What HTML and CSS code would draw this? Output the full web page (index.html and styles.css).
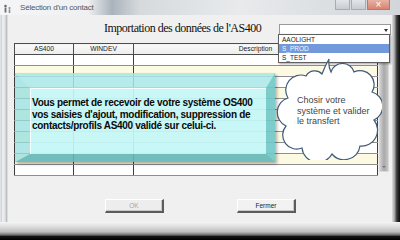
FILE: index.html
```html
<!DOCTYPE html>
<html lang="fr">
  <head>
    <meta charset="UTF-8">
    <title>Sélection d'un contact</title>
    <link rel="stylesheet" href="styles.css">
  </head>
  <body>
    <div class="window">
      <!-- barre de titre -->
      <div class="titlebar">
        <svg class="app-icon" width="9" height="10" viewBox="0 0 9 10">
          <circle cx="2.5" cy="3" r="1.3" fill="#6b6f74"/>
          <rect x="1.6" y="4.5" width="1.8" height="5" fill="#6b6f74"/>
          <circle cx="6.5" cy="5" r="1.1" fill="#8c9096"/>
          <rect x="5.7" y="6.3" width="1.6" height="3.7" fill="#8c9096"/>
        </svg>
        <span class="caption">Sélection d'un contact</span>
        <div class="controls">
          <span class="ctl min"></span>
          <span class="ctl max"></span>
          <span class="ctl close">×</span>
        </div>
      </div>

      <div class="frame">
        <div class="edge-left"></div>
        <div class="client">
          <div class="head">
            <div class="heading">Importation des données de l'AS400</div>
            <div class="combo"><span class="arrow"></span></div>
          </div>

          <div class="grid">
            <table class="list">
              <colgroup><col class="c1"><col class="c2"><col class="c3"></colgroup>
              <thead>
                <tr><th>AS400</th><th>WINDEV</th><th>Description</th></tr>
              </thead>
              <tbody>
                <tr><td></td><td></td><td></td></tr>
                <tr><td></td><td></td><td></td></tr>
                <tr><td></td><td></td><td></td></tr>
                <tr><td></td><td></td><td></td></tr>
                <tr><td></td><td></td><td></td></tr>
                <tr><td></td><td></td><td></td></tr>
                <tr><td></td><td></td><td></td></tr>
                <tr><td></td><td></td><td></td></tr>
                <tr><td></td><td></td><td></td></tr>
                <tr><td></td><td></td><td></td></tr>
                <tr><td></td><td></td><td></td></tr>
              </tbody>
            </table>
            <div class="scroll"><span class="scroll-down"></span></div>
          </div>

          <div class="actions">
            <button class="btn" disabled>OK</button>
            <button class="btn">Fermer</button>
          </div>
        </div>
        <div class="edge-right"></div>
      </div>
      <div class="edge-bottom"></div>

      <!-- liste déroulante ouverte -->
      <ul class="dropdown">
        <li>AAOLIGHT</li>
        <li class="selected">S_PROD</li>
        <li>S_TEST</li>
      </ul>

      <!-- encadré d'aide -->
      <div class="note">
        Vous permet de recevoir de votre système OS400<br>
        vos saisies d'ajout, modification, suppression de<br>
        contacts/profils AS400 validé sur celui-ci.
      </div>

      <!-- bulle nuage -->
      <svg class="cloud" width="106" height="104" viewBox="0 0 106 104">
        <path d="M12 42 A15 15 0 0 1 30 20 A10 10 0 0 1 46 18 Q49 10 53 3 Q52 10 55 16 A12 12 0 0 1 78 16 A14 14 0 0 1 96 36 A15 15 0 0 1 98 64 A16 16 0 0 1 84 90 A16 16 0 0 1 56 98 A16 16 0 0 1 26 92 A14 14 0 0 1 10 70 A15 15 0 0 1 12 42 Z"
              fill="#ffffff" stroke="#3e5a78" stroke-width="1.2"/>
      </svg>
      <div class="cloud-text">Chosir votre<br>système et valider<br>le transfert</div>
    </div>
  </body>
</html>
```

FILE: styles.css
```css
/* fenêtre de dialogue style Vista */
body {
  margin: 0;
  font-family: "Liberation Sans", Arial, sans-serif;
  background: #dfe2e5;
}

.window {
  position: relative;
  width: 400px;
  height: 240px;
  overflow: hidden;
}

.titlebar {
  height: 15px;
  display: flex;
  align-items: center;
  background: linear-gradient(90deg, #f4f5f6 0, #eef0f1 22%, #aab3bc 28%, #d6dadd 35%, #e8eaec 60%, #d2d6da 100%);
}

.app-icon {
  margin: 0 8px 0 3px;
}

.caption {
  font-size: 8px;
  letter-spacing: -0.2px;
  color: #555;
}

.controls {
  margin-left: auto;
  margin-right: 10px;
  align-self: flex-start;
  display: flex;
  gap: 1px;
}

.ctl {
  display: block;
  width: 15px;
  height: 10px;
  box-sizing: border-box;
  border: 1px solid #a5adb5;
  border-top: 0;
  background: linear-gradient(#e3e6e9, #c6ccd2);
  color: #fff;
  font-size: 10px;
  line-height: 9px;
  text-align: center;
}

.ctl.close {
  width: 23px;
  background: linear-gradient(#e9b1a3, #d78470);
  border-color: #b9776a;
}

.frame {
  display: flex;
  height: 207px;
}

.edge-left {
  width: 8px;
  background: linear-gradient(90deg, #f2f2f2 0, #c9cbcd 15%, #eceeef 30%, #e4e6e8 60%, #b5b8bb 85%, #f6f6f6 100%);
}

.edge-right {
  width: 8px;
  background: linear-gradient(90deg, #e0e0e0 0, #a8a8a8 30%, #3a3a3a 60%, #0c0c0c 100%);
}

.edge-bottom {
  height: 18px;
  background: linear-gradient(#f5f5f5 0, #dedede 25%, #bdbdbd 55%, #6d6d6d 72%, #141414 80%, #000 100%);
}

.client {
  width: 384px;
  box-sizing: border-box;
  padding: 0 1px 0 6px;
  background: #f0f0f0;
  display: flex;
  flex-direction: column;
}

.head {
  height: 28px;
  display: flex;
  align-items: center;
  box-sizing: border-box;
  padding-bottom: 2px;
}

.heading {
  flex: 1;
  padding-left: 90px;
  font-family: "Liberation Serif", "Times New Roman", serif;
  font-size: 12px;
  letter-spacing: -0.5px;
  color: #111;
  line-height: 14px;
}

.combo {
  position: relative;
  width: 112px;
  height: 11px;
  margin-top: 2px;
  box-sizing: border-box;
  border: 1px solid #9a9a9a;
  background: #fff;
}

.combo .arrow {
  position: absolute;
  right: 2px;
  top: 4px;
  border: 2px solid transparent;
  border-top: 3px solid #333;
}

.grid {
  display: flex;
  gap: 1px;
  height: 134px;
}

.list {
  width: 364px;
  table-layout: fixed;
  border-collapse: collapse;
  border: 1px solid #4d4d4d;
  align-self: flex-start;
}

.list .c1 { width: 59px; }
.list .c2 { width: 60px; }

.list th {
  height: 10px;
  padding: 0;
  font-size: 6.7px;
  font-weight: normal;
  color: #222;
  background: linear-gradient(#fafafa, #ececec);
  border: 1px solid #4d4d4d;
  line-height: 10px;
}

.list td {
  height: 10px;
  padding: 0;
  background: #fff;
  border-left: 1px solid #3e3e3e;
  border-right: 1px solid #3e3e3e;
  border-bottom: 1px solid #8f8f8f;
}

.list tbody tr:nth-child(even) td {
  background: #fcfae2;
}

.scroll {
  position: relative;
  width: 10px;
  height: 129px;
  box-sizing: border-box;
  border: 1px solid #d9d9d9;
  background: linear-gradient(90deg, #cfcfcf, #a9a9a9 50%, #c4c4c4);
}

.scroll-down {
  position: absolute;
  left: 2px;
  bottom: 1px;
  border: 2px solid transparent;
  border-top: 2px solid #777;
}

.actions {
  display: flex;
  justify-content: center;
  gap: 73px;
  margin-top: 22px;
  padding-right: 4px;
}

.btn {
  width: 59px;
  height: 14px;
  padding: 0;
  font-family: "Liberation Sans", Arial, sans-serif;
  font-size: 6.5px;
  color: #222;
  background: #f2f2f2;
  border: 1px solid #fff;
  border-right: 2px solid #5c5c5c;
  border-bottom: 2px solid #5c5c5c;
  box-shadow: inset -1px -1px 0 #c8c8c8;
}

.btn:disabled {
  color: #a6a6a6;
  background: #ededed;
}

/* liste ouverte du combo */
.dropdown {
  position: absolute;
  left: 278px;
  top: 34px;
  width: 112px;
  margin: 0;
  padding: 0;
  list-style: none;
  box-sizing: border-box;
  border: 1px solid #5f5f5f;
  background: #fff;
  box-shadow: 1px 1px 2px rgba(0, 0, 0, 0.35);
}

.dropdown li {
  height: 9px;
  padding-left: 3px;
  font-size: 6.5px;
  line-height: 9px;
  color: #222;
}

.dropdown li.selected {
  background: #7199dc;
  color: #f4f8ff;
}

/* encadré biseauté cyan */
.note {
  position: absolute;
  left: 15px;
  top: 73px;
  width: 234px;
  height: 57px;
  border-style: solid;
  border-width: 15px 9px 8px 15px;
  border-color: rgba(170, 232, 232, 0.85) rgba(112, 200, 200, 0.9) rgba(98, 184, 186, 0.9) rgba(150, 222, 222, 0.75);
  background: rgba(196, 246, 246, 0.93);
  background-clip: padding-box;
  box-shadow: 2px 2px 3px rgba(0, 0, 0, 0.3), inset 1px 1px 0 rgba(255, 255, 255, 0.8);
  padding: 9px 0 0 2px;
  box-sizing: content-box;
  font-size: 10px;
  font-weight: bold;
  letter-spacing: -0.3px;
  line-height: 11.5px;
  color: #0a0a0a;
  white-space: nowrap;
}

.cloud {
  position: absolute;
  left: 276px;
  top: 56px;
}

.cloud-text {
  position: absolute;
  left: 297px;
  top: 95px;
  font-size: 9px;
  line-height: 10.5px;
  color: #444;
}
```
